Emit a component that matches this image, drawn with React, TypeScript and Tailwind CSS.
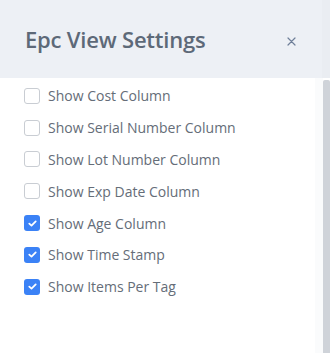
import React from "react";

const items: { label: string; checked: boolean }[] = [
  { label: "Show Cost Column", checked: false },
  { label: "Show Serial Number Column", checked: false },
  { label: "Show Lot Number Column", checked: false },
  { label: "Show Exp Date Column", checked: false },
  { label: "Show Age Column", checked: true },
  { label: "Show Time Stamp", checked: true },
  { label: "Show Items Per Tag", checked: true },
];

function Box({ checked }: { checked: boolean }) {
  if (checked) {
    return (
      <span className="flex h-[16px] w-[16px] items-center justify-center rounded-[3px] bg-[#3b82f6]">
        <svg width="9" height="7" viewBox="0 0 9 7" fill="none">
          <path d="M1.3 3.6 L3.5 5.6 L7.7 1.4" stroke="white" strokeWidth="1.8" strokeLinecap="round" strokeLinejoin="round" />
        </svg>
      </span>
    );
  }
  return <span className="block h-[16px] w-[16px] rounded-[3px] border border-[#c9cdd3] bg-white" />;
}

export default function App() {
  return (
    <div className="flex h-[353px] w-[330px] flex-col bg-white" style={{ fontFamily: '"Open Sans", "Noto Sans", sans-serif' }}>
      <div className="flex h-[78px] shrink-0 bg-[#edf0f5]">
        <div className="flex flex-1 items-center justify-between pl-[25px] pr-[26px]">
          <span className="text-[22px] font-semibold tracking-[-0.2px] text-[#5d6978]">Epc View Settings</span>
          <svg width="9" height="9" viewBox="0 0 9 9" className="mt-[4px]">
            <path d="M1 1 L8 8 M8 1 L1 8" stroke="#6f7f99" strokeWidth="1.2" strokeLinecap="round" />
          </svg>
        </div>
        <div className="w-[8px] bg-[#eaedf2]" />
      </div>
      <div className="flex flex-1">
        <div className="flex flex-1 flex-col pt-[2px]">
          {items.map((it) => (
            <div key={it.label} className="flex h-[31.8px] items-center pl-[24px]">
              <Box checked={it.checked} />
              <span className="ml-[8px] text-[14px] text-[#656d78]">{it.label}</span>
            </div>
          ))}
        </div>
        <div className="w-[8px] bg-[#fafbfc]" />
        <div className="flex w-[7px] flex-col pt-[2px]">
          <div className="flex-1 rounded-t-[2px] bg-[#cfd3d9]" />
        </div>
      </div>
    </div>
  );
}
